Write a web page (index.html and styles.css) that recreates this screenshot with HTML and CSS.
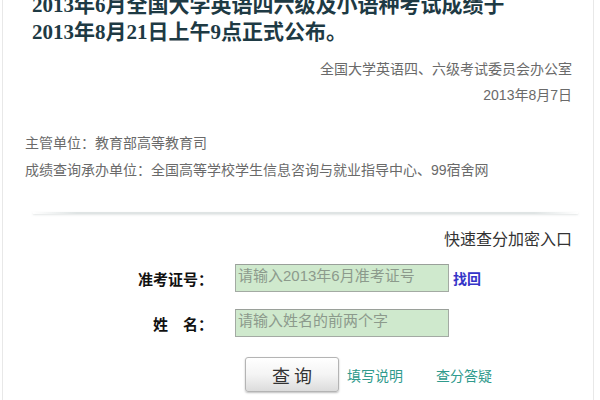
FILE: index.html
```html
<!DOCTYPE html>
<html lang="zh-CN">
<head>
<meta charset="utf-8">
<title>成绩查询</title>
<link rel="stylesheet" href="styles.css">
</head>
<body>
<div class="page">
  <h1 class="title">2013年6月全国大学英语四六级及小语种考试成绩于<br>2013年8月21日上午9点正式公布。</h1>
  <div class="sign">
    <p>全国大学英语四、六级考试委员会办公室</p>
    <p>2013年8月7日</p>
  </div>
  <div class="units">
    <p>主管单位：教育部高等教育司</p>
    <p>成绩查询承办单位：全国高等学校学生信息咨询与就业指导中心、99宿舍网</p>
  </div>
  <div class="sep"></div>
  <div class="quick">快速查分加密入口</div>
  <form class="form">
    <div class="row">
      <label class="label">准考证号：</label>
      <input class="field" type="text" placeholder="请输入2013年6月准考证号">
      <a class="find" href="#">找回</a>
    </div>
    <div class="row">
      <label class="label">姓　名：</label>
      <input class="field" type="text" placeholder="请输入姓名的前两个字">
    </div>
    <div class="actions">
      <button class="btn" type="button">查询</button>
      <a class="help" href="#">填写说明</a>
      <a class="help help2" href="#">查分答疑</a>
    </div>
  </form>
</div>
</body>
</html>
```
FILE: styles.css
```css
html, body {
  margin: 0;
  padding: 0;
  background: #fff;
}
body {
  font-family: "Liberation Sans", "Noto Sans CJK SC", sans-serif;
  overflow: hidden;
}
.page {
  margin-left: 2px;
  width: 590px;
  height: 400px;
  border-left: 1px solid #e8e8e8;
  border-right: 1px solid #e8e8e8;
  overflow: hidden;
}
.title {
  margin: -8px 0 0 0;
  padding-left: 29px;
  font-family: "Liberation Serif", "Noto Sans CJK SC", serif;
  font-size: 21px;
  line-height: 27px;
  font-weight: bold;
  color: #1e3a44;
  white-space: nowrap;
}
.sign {
  margin-top: 10px;
  padding-right: 21px;
  text-align: right;
  font-size: 14px;
  line-height: 26px;
  color: #6a6a6a;
}
.sign p, .units p {
  margin: 0;
}
.units {
  margin-top: 22px;
  padding-left: 22px;
  font-size: 14px;
  line-height: 27px;
  color: #6a6a6a;
}
.sep {
  margin: 28px 15px 0 30px;
  height: 2px;
  background: linear-gradient(to right, rgba(220,226,226,0), #dfe4e4 8%, #dfe4e4 92%, rgba(220,226,226,0));
  box-shadow: 0 1px 2px rgba(200,206,206,0.5);
}
.quick {
  margin-top: 16px;
  padding-right: 21px;
  text-align: right;
  font-size: 16px;
  line-height: 20px;
  color: #333;
}
.form {
  margin: 14px 0 0 0;
}
.row {
  display: flex;
  align-items: center;
  height: 28px;
  margin-bottom: 17px;
}
.label {
  width: 210px;
  margin-right: 22px;
  text-align: right;
  font-size: 15px;
  font-weight: bold;
  color: #111;
  white-space: nowrap;
}
.field {
  box-sizing: border-box;
  width: 214px;
  height: 28px;
  margin: 0;
  padding: 0 0 6px 2px;
  border: 1px solid #a3aaa3;
  border-top-color: #9aa09a;
  background: #cfe9cd;
  font-family: "Liberation Sans", "Noto Sans CJK SC", sans-serif;
  font-size: 15px;
  outline: none;
}
.field::placeholder {
  color: #8c9a8c;
}
.find {
  margin-left: 4px;
  font-size: 14px;
  font-weight: bold;
  color: #3535c8;
  text-decoration: none;
}
.actions {
  display: flex;
  align-items: center;
  margin-top: 20px;
  padding-left: 242px;
}
.btn {
  box-sizing: border-box;
  width: 94px;
  height: 35px;
  margin: 0;
  padding: 0 0 0 4px;
  border: 1px solid #b4b4b4;
  border-radius: 3px;
  background: linear-gradient(to bottom, #ffffff 0%, #f4f4f4 50%, #dcdcdc 100%);
  box-shadow: 0 1px 2px rgba(0,0,0,0.25);
  font-family: "Noto Sans CJK SC", serif;
  font-size: 18px;
  letter-spacing: 4px;
  color: #333;
}
.help {
  margin-left: 8px;
  font-size: 14px;
  color: #2f9a8c;
  text-decoration: none;
}
.help2 {
  margin-left: 33px;
}
```
